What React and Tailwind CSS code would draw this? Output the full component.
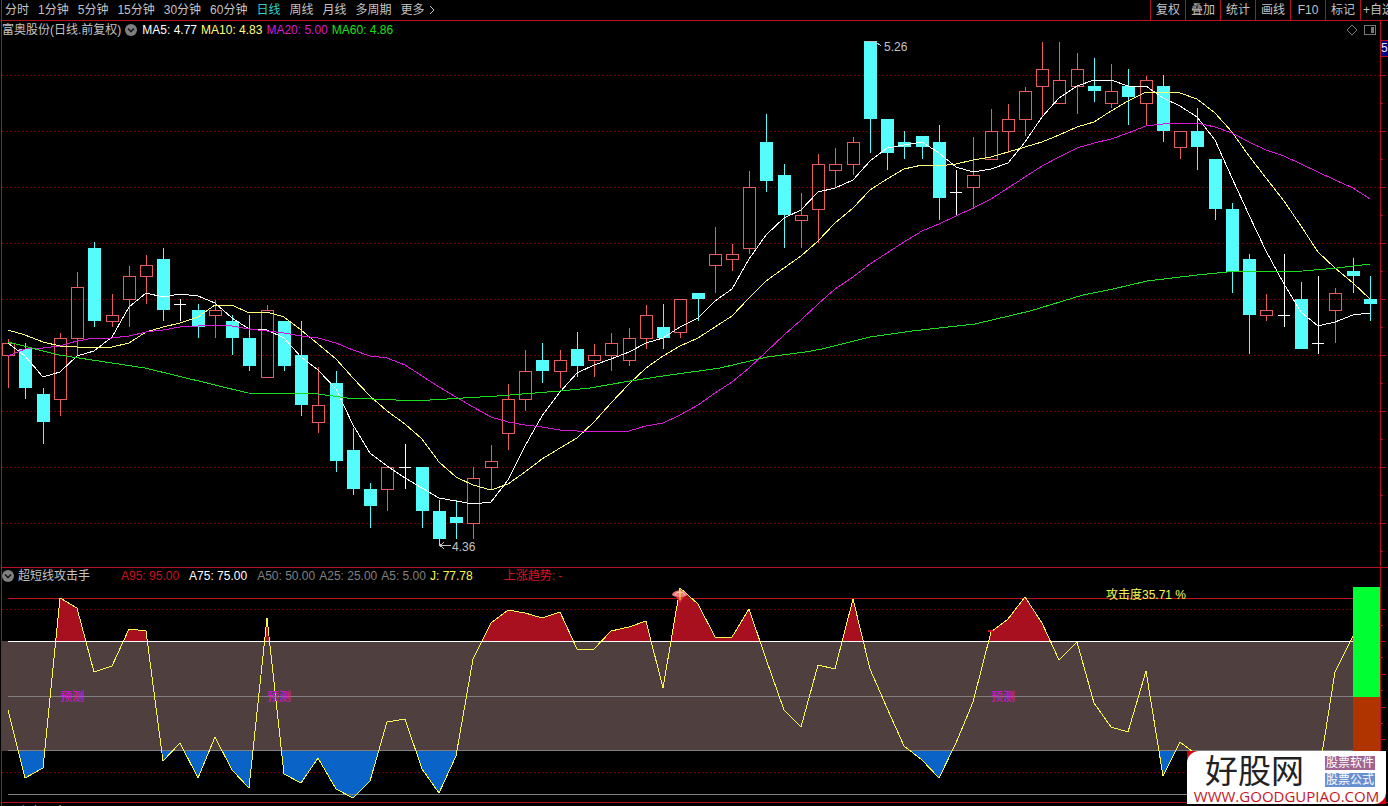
import React from "react";

const STEP = 17.236;
const px = (i) => Math.floor(8.6 + i * STEP);

// kind, body top, body bottom, high, low
const candles = [
  ["up", 343, 356, 339, 388],
  ["down", 349, 388, 343, 399],
  ["down", 394, 422, 388, 444],
  ["up", 338, 400, 333, 416],
  ["up", 287, 339, 272, 355],
  ["down", 248, 321, 242, 327],
  ["up", 315, 322, 294, 327],
  ["up", 276, 300, 266, 327],
  ["up", 265, 277, 255, 304],
  ["down", 259, 310, 248, 321],
  ["flat", 304, 304, 299, 321],
  ["down", 310, 327, 304, 338],
  ["up", 310, 316, 300, 338],
  ["down", 321, 338, 315, 355],
  ["down", 338, 366, 315, 371],
  ["up", 310, 378, 305, 378],
  ["down", 321, 366, 321, 371],
  ["down", 355, 405, 321, 416],
  ["up", 405, 423, 367, 433],
  ["down", 383, 461, 371, 472],
  ["down", 450, 489, 428, 495],
  ["down", 489, 506, 483, 528],
  ["up", 467, 490, 467, 511],
  ["flat", 467, 467, 444, 489],
  ["down", 467, 511, 467, 528],
  ["down", 511, 539, 500, 545],
  ["down", 517, 523, 500, 539],
  ["up", 478, 524, 467, 539],
  ["up", 461, 468, 445, 489],
  ["up", 399, 434, 384, 450],
  ["up", 371, 400, 350, 411],
  ["down", 360, 371, 343, 383],
  ["up", 360, 372, 350, 388],
  ["down", 349, 366, 332, 377],
  ["up", 355, 361, 344, 377],
  ["up", 343, 356, 333, 371],
  ["up", 338, 361, 328, 366],
  ["up", 315, 339, 305, 349],
  ["down", 327, 338, 304, 349],
  ["up", 299, 333, 299, 338],
  ["down", 293, 299, 293, 321],
  ["up", 254, 266, 227, 293],
  ["up", 254, 260, 244, 271],
  ["up", 187, 249, 171, 254],
  ["down", 142, 181, 114, 192],
  ["down", 175, 215, 164, 248],
  ["up", 215, 221, 193, 248],
  ["up", 164, 210, 154, 243],
  ["up", 164, 171, 148, 187],
  ["up", 142, 165, 137, 175],
  ["down", 41, 119, 41, 153],
  ["down", 119, 153, 119, 170],
  ["down", 142, 147, 131, 159],
  ["down", 136, 147, 136, 159],
  ["down", 142, 198, 125, 220],
  ["flat", 192, 192, 170, 215],
  ["up", 175, 188, 137, 209],
  ["up", 131, 160, 109, 160],
  ["up", 119, 132, 104, 153],
  ["up", 91, 120, 87, 136],
  ["up", 69, 87, 42, 116],
  ["up", 80, 104, 42, 104],
  ["up", 69, 87, 53, 114],
  ["down", 86, 91, 58, 102],
  ["up", 91, 104, 64, 108],
  ["down", 86, 97, 69, 125],
  ["up", 80, 104, 76, 125],
  ["down", 86, 131, 75, 142],
  ["up", 131, 148, 131, 159],
  ["down", 131, 147, 108, 170],
  ["down", 159, 209, 159, 220],
  ["down", 209, 272, 203, 293],
  ["down", 259, 315, 254, 354],
  ["up", 310, 316, 294, 321],
  ["flat", 315, 315, 254, 327],
  ["down", 299, 349, 282, 349],
  ["flat", 343, 343, 276, 354],
  ["up", 293, 311, 288, 343],
  ["down", 271, 276, 258, 293],
  ["down", 299, 304, 276, 321],
];

const closes = candles.map(([kind, top, bottom]) => (kind === "up" ? top : bottom));

// the first values come from bars left of the visible window
function movingAverage(period, seed) {
  return closes
    .map((_, i) => {
      if (i < seed.length) return [px(i), seed[i]];
      const part = closes.slice(i - period + 1, i + 1);
      return [px(i), Math.round(part.reduce((a, b) => a + b, 0) / period)];
    })
    .join(" ");
}

const ma5 = movingAverage(5, [343, 356, 377, 372]);
const ma10 = movingAverage(10, [330, 335, 342, 346, 347, 347, 347, 343, 332]);
const ma20 = movingAverage(20, [356, 349, 348, 346, 341, 338, 338, 336, 332, 330, 327, 326, 325, 326, 329, 331, 333, 336, 338]);
const ma60 =
  "8,342 59,355 145,368 248,393 318,394 347,398 396,400 430,400 497,396 560,391 590,388 630,381 663,376 720,368 767,357 805,352 822,349 870,337 912,331 975,324 1030,311 1083,295 1113,289 1147,281 1197,275 1227,272 1303,271 1337,268 1370,264";

const attack = [
  710, 778, 768, 598, 608, 672, 666, 629, 631, 761, 743, 778, 737, 770, 788, 618, 774, 783, 758, 789,
  798, 781, 722, 719, 769, 793, 756, 659, 623, 610, 613, 618, 612, 649, 649, 631, 627, 621, 688, 588,
  604, 637, 637, 609, 659, 710, 727, 665, 669, 599, 669, 708, 746, 760, 778, 743, 702, 632, 619, 597,
  623, 660, 642, 703, 727, 732, 671, 776, 742, 755, 772, 780, 784, 780, 776, 784, 779, 672, 636,
];
const attackLine = attack.map((y, i) => `${px(i)},${y}`).join(" ");

const gridRows = [75, 131, 187, 243, 299, 355, 411, 467, 523];
const periods = ["分时", "1分钟", "5分钟", "15分钟", "30分钟", "60分钟", "日线", "周线", "月线", "多周期"];
const tools = ["复权", "叠加", "统计", "画线", "F10", "标记"];

function Candle({ x, data }) {
  const [kind, top, bottom, high, low] = data;
  if (kind === "flat") {
    return <path d={`M${x + 0.5} ${high}V${low}M${x - 6} ${top + 0.5}h12`} stroke="#fff" fill="none" />;
  }
  if (kind === "up") {
    return (
      <g stroke="#e85c5c" fill="none">
        <path d={`M${x + 0.5} ${high}V${top}M${x + 0.5} ${bottom}V${low}`} />
        <rect x={x - 5.5} y={top + 0.5} width="12" height={bottom - top - 1} />
      </g>
    );
  }
  return (
    <g>
      <path d={`M${x + 0.5} ${high}V${low}`} stroke="#54fcfc" />
      <rect x={x - 6} y={top} width="13" height={bottom - top} fill="#54fcfc" />
    </g>
  );
}

function Collapse({ label }) {
  return (
    <button aria-label={label} className="shrink-0">
      <svg viewBox="0 0 12 12" className="block w-3 h-3">
        <circle cx="6" cy="6" r="6" fill="#808080" />
        <path d="M3 4.5L6 7.5L9 4.5" stroke="#181818" strokeWidth="1.6" fill="none" />
      </svg>
    </button>
  );
}

function Toolbar() {
  return (
    <header className="flex h-[21px] shrink-0 items-stretch justify-between border-b border-l border-[#b8101c] text-[#c4c4c4] ml-px overflow-hidden">
      <nav className="flex items-center gap-[9px] pl-[3px]">
        {periods.map((p) => (
          <button key={p} className={p === "日线" ? "text-[#30d0d0]" : ""}>
            {p}
          </button>
        ))}
        <button className="flex items-center gap-1">
          更多
          <svg viewBox="0 0 6 10" className="w-[6px] h-[10px]">
            <path d="M1 1L5 5L1 9" stroke="#c4c4c4" fill="none" />
          </svg>
        </button>
      </nav>
      <div className="flex">
        {tools.map((t) => (
          <button key={t} className="w-[35px] border-l border-[#b8101c] text-center">
            {t}
          </button>
        ))}
        <button className="w-[28px] overflow-hidden border-l border-[#b8101c] pl-[2px] text-left">+自选</button>
      </div>
    </header>
  );
}

function PriceChart() {
  return (
    <svg viewBox="2 39 1378 528" className="block w-full h-auto" shapeRendering="crispEdges" role="img" aria-label="日线">
      {gridRows.map((y) => (
        <path key={y} d={`M2 ${y + 0.5}H1380`} stroke="#6c0008" strokeDasharray="2 2" />
      ))}
      {candles.map((c, i) => (
        <Candle key={i} x={px(i)} data={c} />
      ))}
      <g fill="none">
        <polyline points={ma5} stroke="#ffffff" />
        <polyline points={ma10} stroke="#ffff78" />
        <polyline points={ma20} stroke="#d818d8" />
        <polyline points={ma60} stroke="#18e018" />
      </g>
      <g stroke="#c0c0c0" fill="none">
        <path d="M866 41.5H874L881 45.5" />
        <path d="M440 545.5H451M444 542L440 545.5L444 549" />
      </g>
      <g fill="#c4c4c4" fontSize="12">
        <text x="884" y="51">5.26</text>
        <text x="452" y="551">4.36</text>
      </g>
    </svg>
  );
}

function AttackChart() {
  return (
    <svg viewBox="2 584 1378 218" className="block w-full h-auto" shapeRendering="crispEdges" role="img" aria-label="超短线攻击手">
      <defs>
        <clipPath id="above">
          <rect x="2" y="584" width="1351" height="57" />
        </clipPath>
        <clipPath id="below">
          <rect x="2" y="751" width="1351" height="51" />
        </clipPath>
      </defs>
      <rect x="2" y="641" width="1351" height="110" fill="#503f3f" />
      <path d="M2 609.5H1380M2 772.5H1380" stroke="#6c0008" strokeDasharray="2 2" />
      <polygon points={`8,641 ${attackLine} 1353,641`} fill="#a81020" clipPath="url(#above)" />
      <polygon points={`8,751 ${attackLine} 1353,751`} fill="#0a64c8" clipPath="url(#below)" />
      <path d="M8 598.5H1353" stroke="#c01018" />
      <path d="M8 641.5H1353" stroke="#fff" />
      <path d="M8 696.5H1353M8 750.5H1353M8 794.5H1353" stroke="#808080" />
      <polyline points={attackLine} stroke="#f8f850" fill="none" />
      <g fill="#e010e0" fontSize="12">
        <text x="60" y="701">预测</text>
        <text x="267" y="701">预测</text>
        <text x="991" y="701">预测</text>
      </g>
      <g shapeRendering="auto">
        <path d="M672 595C673 589 686 589 687 595C685 598 675 598 672 595Z" fill="#f07878" />
        <path d="M675 595C677 591 683 591 685 595" stroke="#fcd8c8" fill="none" />
        <path d="M676 597H684L680 603Z" fill="#e03030" />
        <path d="M680 589V600" stroke="#f8f850" />
      </g>
      <path d="M988 630.5H993" stroke="#e01020" strokeWidth="2" />
      <text x="1106" y="599" fill="#f8f850" fontSize="12">攻击度35.71 %</text>
      <rect x="1353" y="587" width="27" height="110" fill="#00ff33" />
      <rect x="1353" y="697" width="27" height="97" fill="#b03400" />
    </svg>
  );
}

function Watermark() {
  return (
    <a href="#" className="absolute bottom-[2px] right-[2px] bg-[#d00010]">
      <span className="block w-[199px] h-[53px] rounded-tl-xl rounded-br-xl bg-white px-[6px] pt-[3px]">
        <span className="flex h-[35px] items-center justify-between pl-3 pr-[5px]">
          <span className="text-[33px] leading-[34px] text-[#222]">好股网</span>
          <span className="flex flex-col gap-[3px] text-white">
            <span className="bg-[#a06490] px-px leading-[14px]">股票软件</span>
            <span className="bg-[#6890d0] px-px leading-[14px]">股票公式</span>
          </span>
        </span>
        <span className="block text-center font-['Open_Sans'] text-[15px] leading-[14px] text-[#c81424]">WWW.GOODGUPIAO.COM</span>
      </span>
    </a>
  );
}

export default function App() {
  return (
    <div className="relative flex h-screen flex-col overflow-hidden bg-black font-['Liberation_Sans','Noto_Sans_CJK_SC',sans-serif] text-[12px] leading-[18px] whitespace-nowrap">
      <Toolbar />

      <section className="ml-px flex shrink-0">
        <div className="min-w-0 flex-1 border-x border-[#b8101c]">
          <div className="flex h-[18px] items-center gap-1 pr-1">
            <h1 className="text-[#c4c4c4]">富奥股份(日线.前复权)</h1>
            <Collapse label="主图指标" />
            <span className="ml-px text-white">MA5: 4.77</span>
            <span className="text-[#ffff78]">MA10: 4.83</span>
            <span className="text-[#d818d8]">MA20: 5.00</span>
            <span className="text-[#18e018]">MA60: 4.86</span>
            <svg viewBox="0 0 32 12" className="ml-auto h-3 w-8" fill="none" stroke="#787878">
              <path d="M8 1L13 6L8 11L3 6Z" />
              <rect x="20.5" y="1.5" width="11" height="9" />
              <rect x="27" y="3" width="3" height="6" fill="#787878" stroke="none" />
            </svg>
          </div>
          <PriceChart />
        </div>
        <div className="w-[7px] shrink-0">
          <svg viewBox="1381 21 7 546" className="block w-full h-auto" shapeRendering="crispEdges">
            {gridRows.map((y) => (
              <path key={y} d={`M1381 ${y + 0.5}h5M1381 ${y + 28.5}h2`} stroke="#b8101c" />
            ))}
            <rect x="1381" y="40" width="8" height="16" fill="#000080" />
            <path d="M1381 40.5h7M1381 56.5h7" stroke="#b8101c" />
            <text x="1381" y="52" fill="#e0e0ff" fontSize="12">5</text>
          </svg>
        </div>
      </section>

      <section className="ml-px flex shrink-0 border-y border-[#b8101c]">
        <div className="min-w-0 flex-1 border-x border-[#b8101c]">
          <div className="flex h-4 items-center gap-1">
            <Collapse label="副图指标" />
            <h2 className="text-[#c4c4c4]">超短线攻击手</h2>
            <span className="ml-[27px] text-[#c81420]">A95: 95.00</span>
            <span className="ml-[6px] text-white">A75: 75.00</span>
            <span className="ml-[6px] text-[#808080]">A50: 50.00</span>
            <span className="text-[#808080]">A25: 25.00</span>
            <span className="text-[#808080]">A5: 5.00</span>
            <span className="text-[#f8f850]">J: 77.78</span>
            <span className="ml-[27px] text-[#e01020]">上涨趋势: -</span>
          </div>
          <AttackChart />
        </div>
        <div className="w-[7px] shrink-0">
          <svg viewBox="1381 568 7 234" className="block w-full h-auto" shapeRendering="crispEdges">
            {[609, 641, 674, 707, 739, 772].map((y) => (
              <path key={y} d={`M1381 ${y + 0.5}h5M1381 ${y + 16.5}h2`} stroke="#b8101c" />
            ))}
          </svg>
        </div>
      </section>

      <section className="ml-px flex shrink-0 items-center gap-1 border-l border-[#b8101c]">
        <Collapse label="副图指标" />
        <h2 className="text-[#c4c4c4]">主力买卖</h2>
      </section>

      <Watermark />
    </div>
  );
}
